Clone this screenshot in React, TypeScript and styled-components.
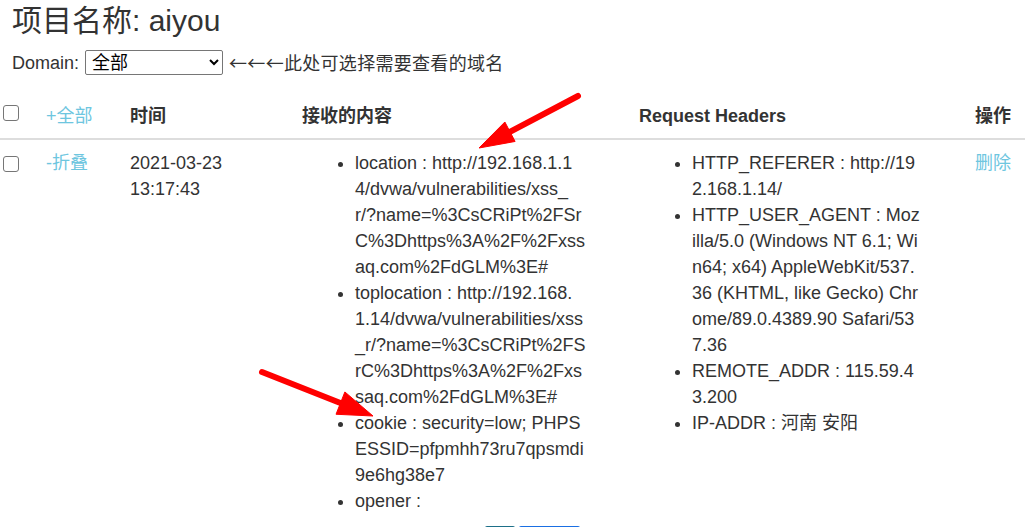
import React from "react";
import styled, { createGlobalStyle } from "styled-components";

const GlobalStyle = createGlobalStyle`
  html, body { margin: 0; padding: 0; background: #fff; }
  body {
    font-family: "Liberation Sans", Arial, "Noto Sans CJK SC", sans-serif;
    font-size: 18px;
    line-height: 26px;
    color: #333;
  }
  * { box-sizing: border-box; }
`;

const Page = styled.div`
  position: relative;
  width: 1025px;
`;

const Title = styled.h1`
  margin: 0;
  padding: 4px 12px 0;
  font-size: 30px;
  font-weight: 400;
  line-height: 34px;
`;

const DomainBar = styled.div`
  display: flex;
  align-items: center;
  gap: 6px;
  height: 25px;
  margin-top: 12px;
  padding: 0 12px;
`;

const DomainSelect = styled.select`
  width: 138px;
  height: 25px;
  padding: 0 2px;
  font-family: "Liberation Sans", Arial, "Noto Sans CJK SC", sans-serif;
  font-size: 18px;
  color: #000;
  background: #fff;
  border: 1px solid #767676;
  border-radius: 2px;
`;

const Hint = styled.span`
  white-space: nowrap;
  font-family: "Noto Sans CJK SC", sans-serif;
  line-height: 25px;
  letter-spacing: 0.3px;
`;

const Table = styled.table`
  width: 100%;
  margin-top: 20px;
  border-collapse: collapse;
  table-layout: fixed;
`;

const Col = styled.col<{ $w: number }>`
  width: ${(p) => p.$w}px;
`;

const HeadCell = styled.th<{ $first?: boolean }>`
  text-align: left;
  font-weight: 700;
  padding: 8px 8px 9px ${(p) => (p.$first ? 3 : 8)}px;
  border-bottom: 2px solid #ddd;
  vertical-align: top;
  white-space: nowrap;
`;

const Cell = styled.td<{ $first?: boolean }>`
  padding: 10px 8px 8px ${(p) => (p.$first ? 3 : 8)}px;
  vertical-align: top;
`;

const Check = styled.input.attrs({ type: "checkbox" })<{ $offset: number }>`
  appearance: none;
  display: block;
  width: 16px;
  height: 16px;
  margin: ${(p) => p.$offset}px 0 0;
  border: 1px solid #767676;
  border-radius: 3px;
  background: #fff;
`;

const ActionLink = styled.a<{ $plain?: boolean }>`
  color: #6ec6df;
  text-decoration: none;
  cursor: pointer;
  font-weight: ${(p) => (p.$plain ? 400 : "inherit")};
`;

const ValueList = styled.ul`
  margin: 0;
  padding-left: 53px;
  list-style: disc;
`;

const Line = styled.span`
  display: block;
  white-space: nowrap;
`;

const Pager = styled.div`
  display: flex;
  gap: 4px;
  margin: 4px 0 0 485px;
`;

const PageButton = styled.button<{ $tone: "teal" | "blue"; $w: number }>`
  width: ${(p) => p.$w}px;
  height: 34px;
  border: none;
  border-radius: 2px;
  background: ${(p) => (p.$tone === "teal" ? "#1d6f88" : "#1a6fe3")};
`;

const Overlay = styled.svg`
  position: absolute;
  top: 0;
  left: 0;
  pointer-events: none;
`;

const contentItems: string[][] = [
  [
    "location : http://192.168.1.1",
    "4/dvwa/vulnerabilities/xss_",
    "r/?name=%3CsCRiPt%2FSr",
    "C%3Dhttps%3A%2F%2Fxss",
    "aq.com%2FdGLM%3E#",
  ],
  [
    "toplocation : http://192.168.",
    "1.14/dvwa/vulnerabilities/xss",
    "_r/?name=%3CsCRiPt%2FS",
    "rC%3Dhttps%3A%2F%2Fxs",
    "saq.com%2FdGLM%3E#",
  ],
  ["cookie : security=low; PHPS", "ESSID=pfpmhh73ru7qpsmdi", "9e6hg38e7"],
  ["opener : "],
];

const headerItems: string[][] = [
  ["HTTP_REFERER : http://19", "2.168.1.14/"],
  [
    "HTTP_USER_AGENT : Moz",
    "illa/5.0 (Windows NT 6.1; Wi",
    "n64; x64) AppleWebKit/537.",
    "36 (KHTML, like Gecko) Chr",
    "ome/89.0.4389.90 Safari/53",
    "7.36",
  ],
  ["REMOTE_ADDR : 115.59.4", "3.200"],
  ["IP-ADDR : 河南 安阳"],
];

function Values({ items }: { items: string[][] }) {
  return (
    <ValueList>
      {items.map((lines, i) => (
        <li key={i}>
          {lines.map((l, j) => (
            <Line key={j}>{l}</Line>
          ))}
        </li>
      ))}
    </ValueList>
  );
}

function Arrow({
  tail,
  tip,
  head = 35,
  half = 11,
}: {
  tail: [number, number];
  tip: [number, number];
  head?: number;
  half?: number;
}) {
  const dx = tip[0] - tail[0];
  const dy = tip[1] - tail[1];
  const len = Math.hypot(dx, dy);
  const ux = dx / len;
  const uy = dy / len;
  const bx = tip[0] - ux * head;
  const by = tip[1] - uy * head;
  const px = -uy;
  const py = ux;
  const pts = `${tip[0]},${tip[1]} ${bx + px * half},${by + py * half} ${bx - px * half},${by - py * half}`;
  return (
    <g fill="#ff0000" stroke="#ff0000">
      <line
        x1={tail[0]}
        y1={tail[1]}
        x2={bx + ux * 4}
        y2={by + uy * 4}
        strokeWidth={6}
        strokeLinecap="round"
      />
      <polygon points={pts} strokeWidth={1} strokeLinejoin="round" />
    </g>
  );
}

export default function App() {
  return (
    <Page>
      <GlobalStyle />
      <Title>项目名称: aiyou</Title>
      <DomainBar>
        <span>Domain:</span>
        <DomainSelect defaultValue="all">
          <option value="all">全部</option>
        </DomainSelect>
        <Hint>←←←此处可选择需要查看的域名</Hint>
      </DomainBar>
      <Table>
        <colgroup>
          <Col $w={38} />
          <Col $w={84} />
          <Col $w={172} />
          <Col $w={337} />
          <Col $w={336} />
          <Col $w={58} />
        </colgroup>
        <thead>
          <tr>
            <HeadCell $first>
              <Check $offset={2} />
            </HeadCell>
            <HeadCell>
              <ActionLink $plain>+全部</ActionLink>
            </HeadCell>
            <HeadCell>时间</HeadCell>
            <HeadCell>接收的内容</HeadCell>
            <HeadCell>Request Headers</HeadCell>
            <HeadCell>操作</HeadCell>
          </tr>
        </thead>
        <tbody>
          <tr>
            <Cell $first>
              <Check $offset={6} />
            </Cell>
            <Cell>
              <ActionLink>-折叠</ActionLink>
            </Cell>
            <Cell>2021-03-23 13:17:43</Cell>
            <Cell>
              <Values items={contentItems} />
            </Cell>
            <Cell>
              <Values items={headerItems} />
            </Cell>
            <Cell>
              <ActionLink>删除</ActionLink>
            </Cell>
          </tr>
        </tbody>
      </Table>
      <Pager>
        <PageButton $tone="teal" $w={30} />
        <PageButton $tone="blue" $w={61} />
      </Pager>
      <Overlay width={1025} height={527} viewBox="0 0 1025 527">
        <Arrow tail={[578, 96]} tip={[479, 148]} />
        <Arrow tail={[262, 372]} tip={[373, 416]} half={12} />
      </Overlay>
    </Page>
  );
}
